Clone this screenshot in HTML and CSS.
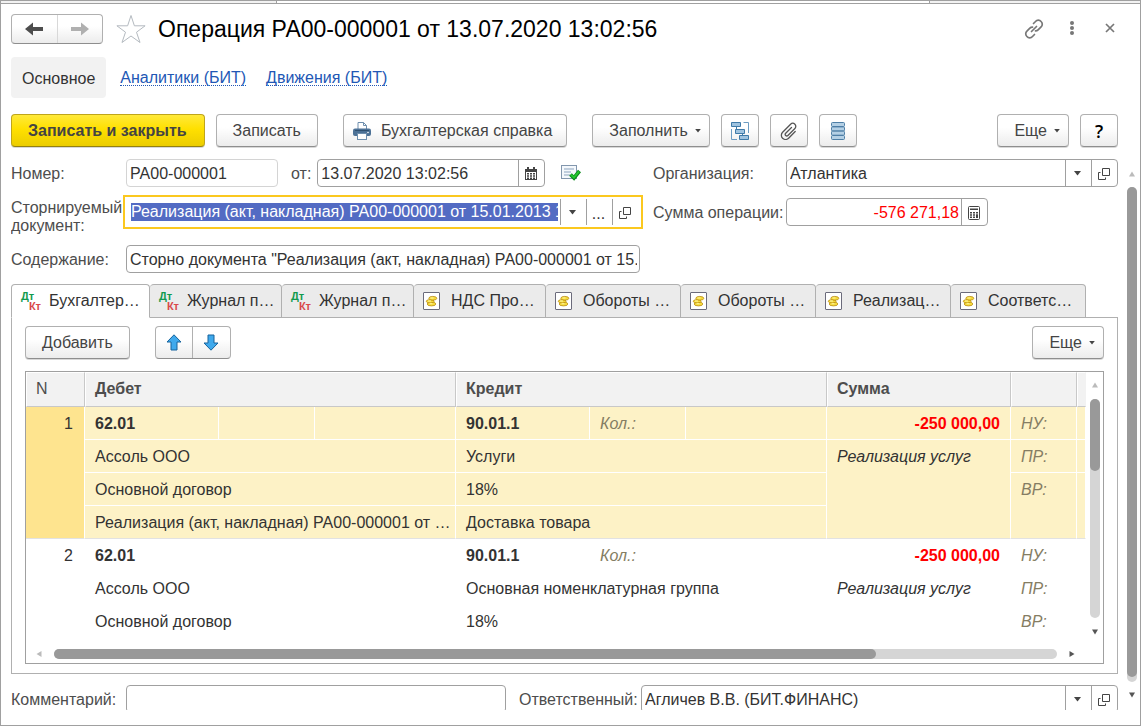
FILE: index.html
```html
<!DOCTYPE html>
<html lang="ru">
<head>
<meta charset="utf-8">
<title>Операция РА00-000001</title>
<link rel="stylesheet" href="styles.css">
</head>
<body>
<svg class="sprite" aria-hidden="true">
  <symbol id="i-open" viewBox="0 0 14 14"><path d="M5.5 1.500h7v7h-7zM3.500 5.500h-2v7h7v-2" fill="none" stroke="#444"/></symbol>
  <symbol id="i-drop" viewBox="0 0 7 5"><path d="M0 0h7L3.500 4.500z" fill="#444"/></symbol>
  <symbol id="i-coin" viewBox="0 0 20 18">
    <rect x=".5" y=".5" width="16" height="17" rx=".5" fill="#fff" stroke="#6b6b7b"/>
    <g fill="#f7dc3c" stroke="#b98a12" stroke-width=".8">
      <ellipse cx="8.500" cy="12" rx="4.300" ry="1.900"/><ellipse cx="7.200" cy="9.300" rx="3.900" ry="1.700"/><ellipse cx="9.800" cy="6.300" rx="4" ry="1.900"/>
    </g>
    <path d="M7.500 6h3M5 9h3M6.500 11.700h3" stroke="#fff6a0" fill="none"/>
  </symbol>
</svg>
<div class="window">
  <div class="strip"><span></span><span></span><span></span></div>

  <header class="titlebar">
    <div class="pair nav-pair">
      <button type="button" aria-label="Назад"><svg width="18" height="14" viewBox="0 0 18 14"><path d="M0 7l8-6.500v4.500h10v4H8v4.500z" fill="#4d4d4d"/></svg></button>
      <button type="button" aria-label="Вперед"><svg width="18" height="14" viewBox="0 0 18 14"><path d="M18 7l-8-6.500v4.500H0v4h10v4.500z" fill="#b0b0b0"/></svg></button>
    </div>
    <button type="button" class="plain star" aria-label="В избранное"><svg width="30" height="30" viewBox="0 0 30 30"><path d="M15 1.500l3.400 10.300h10.700l-8.600 6.400 3.500 10.300-9-6.500-9 6.500 3.500-10.300L.9 11.800h10.700z" fill="#fff" stroke="#b4bac0"/></svg></button>
    <h1>Операция РА00-000001 от 13.07.2020 13:02:56</h1>
    <div class="window-tools">
      <button type="button" class="plain" aria-label="Ссылка"><svg width="20" height="20" viewBox="0 0 20 20" fill="none" stroke="#777" stroke-width="1.700" stroke-linecap="round"><path d="M9.500 4.500l2-2a3.700 3.700 0 0 1 5.600 0a3.700 3.700 0 0 1 0 5.400l-3 3a3.500 3.500 0 0 1-2.600 1M10.500 15.500l-2 2a3.700 3.700 0 0 1-5.600 0a3.700 3.700 0 0 1 0-5.400l3-3a3.500 3.500 0 0 1 2.600-1M7.500 12.500l5-5"/></svg></button>
      <button type="button" class="plain" aria-label="Меню"><svg width="20" height="20" viewBox="0 0 20 20" fill="#777"><circle cx="10" cy="4" r="2"/><circle cx="10" cy="9" r="2"/><circle cx="10" cy="14" r="2"/></svg></button>
      <button type="button" class="plain" aria-label="Закрыть"><svg width="20" height="20" viewBox="0 0 20 20"><path d="M6 5l8 8M14 5l-8 8" stroke="#777" stroke-width="1.700"/></svg></button>
    </div>
  </header>

  <nav class="sections">
    <span class="current">Основное</span>
    <a href="#analytics">Аналитики (БИТ)</a>
    <a href="#moves">Движения (БИТ)</a>
  </nav>

  <div class="commands">
    <button type="button" class="btn primary">Записать и закрыть</button>
    <button type="button" class="btn">Записать</button>
    <button type="button" class="btn apart print"><svg width="18" height="18" viewBox="0 0 18 18"><path d="M5 8V.500h5.500L13.500 3.500V8" fill="#fff" stroke="#6f8fae"/><path d="M10.500.500v3h3" fill="none" stroke="#6f8fae"/><rect y="6.500" width="18" height="7.500" rx="2" fill="#4c7196"/><path d="M2 8.500h14" stroke="#2f5070"/><circle cx="15" cy="10.500" r=".8" fill="#fff"/><rect x="4.500" y="11.500" width="9" height="6" fill="#fff" stroke="#6f8fae"/></svg>Бухгалтерская справка</button>
    <button type="button" class="btn apart menu">Заполнить<svg width="6" height="4"><use href="#i-drop"/></svg></button>
    <button type="button" class="btn square" aria-label="Структура"><svg width="18" height="18" viewBox="0 0 18 18"><path d="M12.500.500h5V11M.500 7v10.500H6" fill="none" stroke="#6d9cc2"/><g fill="#9fc3df" stroke="#3f7aa8"><path d="M.500.500h9v4h-9zM4.500 7.500h9v4h-9zM8.500 13.500h9v4h-9z"/></g><path d="M5.500 5v2.500M11.500 12v1.500" stroke="#3f7aa8"/></svg></button>
    <button type="button" class="btn square" aria-label="Файлы"><svg width="18" height="18" viewBox="0 0 18 18" fill="none" stroke="#555" stroke-width="1.300" stroke-linecap="round"><path d="M11.500 5.500l-5.800 5.800a1.500 1.500 0 0 0 2.200 2.200l7-7a3 3 0 0 0-4.300-4.300l-8 8a4.200 4.200 0 0 0 6 6l6.600-6.700"/></svg></button>
    <button type="button" class="btn square" aria-label="Список"><svg width="14" height="18" viewBox="0 0 14 18"><g fill="#b4d0e5" stroke="#4d7ea6"><rect x=".5" y=".5" width="13" height="4" rx="1"/><rect x=".5" y="4.900" width="13" height="4" rx="1"/><rect x=".5" y="9.200" width="13" height="4" rx="1"/><rect x=".5" y="13.500" width="13" height="4" rx="1"/></g></svg></button>
    <span class="grow"></span>
    <button type="button" class="btn menu">Еще<svg width="6" height="4"><use href="#i-drop"/></svg></button>
    <button type="button" class="btn square help">?</button>
  </div>

  <div class="viewport">
    <main class="form">
      <div class="fields">
        <label for="number">Номер:</label>
        <div class="line">
          <div class="field muted number"><input id="number" value="РА00-000001"></div>
          <label for="date">от:</label>
          <div class="field date"><input id="date" value="13.07.2020 13:02:56"><button type="button" aria-label="Календарь"><svg width="12" height="13" viewBox="0 0 12 13"><path d="M0 2h2V0h2v2h4V0h2v2h2v11H0z" fill="#444"/><path d="M1 5h10v7H1z" fill="#fff"/><path d="M2 6h2v1.500H2zM5 6h2v1.500H5zM8 6h2v1.500H8zM2 8.300h2v1.500H2zM5 8.300h2v1.500H5zM8 8.300h2v1.500H8zM2 10.500h2V12H2zM5 10.500h2V12H5zM8 10.500h2V12H8z" fill="#444"/></svg></button></div>
          <svg class="posted" width="20" height="16" viewBox="0 0 20 16"><rect x=".5" y=".5" width="15" height="13" fill="#f4f8fc" stroke="#8296ad"/><path d="M3 4h10M3 7h7M3 10h6" stroke="#8ba3bd"/><path d="M9.500 9.500l3.500 3.500 5.500-7" fill="none" stroke="#0b8a1b" stroke-width="3.800"/><path d="M10 9.800l3 2.800 5-6.200" fill="none" stroke="#23c52f" stroke-width="2"/></svg>
        </div>
        <label class="second" for="org">Организация:</label>
        <div class="field"><input id="org" value="Атлантика"><button type="button" aria-label="Выбрать"><svg width="7" height="5"><use href="#i-drop"/></svg></button><button type="button" aria-label="Открыть"><svg width="14" height="14"><use href="#i-open"/></svg></button></div>

        <label for="storno">Сторнируемый документ:</label>
        <div class="field active"><input id="storno" value="Реализация (акт, накладная) РА00-000001 от 15.01.2013 12:00:00"><button type="button" aria-label="Выбрать"><svg width="7" height="5"><use href="#i-drop"/></svg></button><button type="button" class="dots">...</button><button type="button" aria-label="Открыть"><svg width="14" height="14"><use href="#i-open"/></svg></button></div>
        <label class="second" for="total">Сумма операции:</label>
        <div class="field total"><input id="total" value="-576 271,18"><button type="button" aria-label="Калькулятор"><svg width="12" height="14" viewBox="0 0 12 14"><rect x=".5" y=".5" width="11" height="13" rx="1" fill="#fff" stroke="#444"/><path d="M2 2.500h8v1.500H2zM2 6h2v1.500H2zM5 6h2v1.500H5zM8 6h2v1.500H8zM2 8.300h2v1.500H2zM5 8.300h2v1.500H5zM2 10.500h2V12H2zM5 10.500h2V12H5zM8 8.300h2V12H8z" fill="#444"/></svg></button></div>

        <label for="content">Содержание:</label>
        <div class="field"><input id="content" value="Сторно документа &quot;Реализация (акт, накладная) РА00-000001 от 15.01.2013&quot;"></div>
      </div>

      <div class="tabs" role="tablist">
        <button type="button" role="tab" class="wide" aria-selected="true"><span class="dtkt"><span>Дт</span><span>Кт</span></span>Бухгалтер…</button>
        <button type="button" role="tab" class="narrow"><span class="dtkt"><span>Дт</span><span>Кт</span></span>Журнал п…</button>
        <button type="button" role="tab" class="narrow"><span class="dtkt"><span>Дт</span><span>Кт</span></span>Журнал п…</button>
        <button type="button" role="tab" class="narrow"><svg width="20" height="18"><use href="#i-coin"/></svg>НДС Про…</button>
        <button type="button" role="tab"><svg width="20" height="18"><use href="#i-coin"/></svg>Обороты …</button>
        <button type="button" role="tab"><svg width="20" height="18"><use href="#i-coin"/></svg>Обороты …</button>
        <button type="button" role="tab"><svg width="20" height="18"><use href="#i-coin"/></svg>Реализац…</button>
        <button type="button" role="tab"><svg width="20" height="18"><use href="#i-coin"/></svg>Соответс…</button>
      </div>

      <section class="panel">
        <div class="commands inner">
          <button type="button" class="btn">Добавить</button>
          <div class="pair move-pair">
            <button type="button" aria-label="Вверх"><svg width="16" height="17" viewBox="0 0 16 17"><path d="M8 .800l7 7.200h-4v8H5V8H1z" fill="#3fa9ec" stroke="#16639c"/></svg></button>
            <button type="button" aria-label="Вниз"><svg width="16" height="17" viewBox="0 0 16 17"><path d="M8 16.200l7-7.200h-4V1H5v8H1z" fill="#3fa9ec" stroke="#16639c"/></svg></button>
          </div>
          <span class="grow"></span>
          <button type="button" class="btn menu">Еще<svg width="6" height="4"><use href="#i-drop"/></svg></button>
        </div>

        <div class="grid">
          <div class="grid-body">
            <table>
              <colgroup><col class="c-n"><col class="c-acc"><col class="c-qty"><col><col class="c-acc"><col class="c-qty"><col><col class="c-sum"><col class="c-tax"><col class="c-rest"></colgroup>
              <thead><tr><th class="light">N</th><th colspan="3">Дебет</th><th colspan="3">Кредит</th><th>Сумма</th><th></th><th></th></tr></thead>
              <tbody class="selected">
                <tr><td class="n" rowspan="4">1</td><td class="b">62.01</td><td></td><td></td><td class="b">90.01.1</td><td class="hint">Кол.:</td><td></td><td class="sum">-250 000,00</td><td class="hint">НУ:</td><td></td></tr>
                <tr><td colspan="3">Ассоль ООО</td><td colspan="3">Услуги</td><td class="i" rowspan="3">Реализация услуг</td><td class="hint">ПР:</td><td></td></tr>
                <tr><td colspan="3">Основной договор</td><td colspan="3">18%</td><td class="hint" rowspan="2">ВР:</td><td rowspan="2"></td></tr>
                <tr><td colspan="3">Реализация (акт, накладная) РА00-000001 от …</td><td colspan="3">Доставка товара</td></tr>
              </tbody>
              <tbody>
                <tr><td class="n" rowspan="3">2</td><td class="b">62.01</td><td></td><td></td><td class="b">90.01.1</td><td class="hint">Кол.:</td><td></td><td class="sum">-250 000,00</td><td class="hint">НУ:</td><td></td></tr>
                <tr><td colspan="3">Ассоль ООО</td><td colspan="3">Основная номенклатурная группа</td><td class="i" rowspan="2">Реализация услуг</td><td class="hint">ПР:</td><td></td></tr>
                <tr><td colspan="3">Основной договор</td><td colspan="3">18%</td><td class="hint">ВР:</td><td></td></tr>
              </tbody>
            </table>
            <div class="scroll vertical">
              <svg width="6" height="6"><path d="M0 5.500h6L3 .5z" fill="#bbb"/></svg>
              <div class="track"><div class="thumb"></div></div>
              <svg width="6" height="6"><path d="M0 .5h6L3 5.500z" fill="#555"/></svg>
            </div>
          </div>
          <div class="scroll horizontal">
            <svg width="6" height="6"><path d="M5.500 0v6L.5 3z" fill="#bbb"/></svg>
            <div class="track"><div class="thumb"></div></div>
            <svg width="6" height="6"><path d="M.5 0v6L5.500 3z" fill="#555"/></svg>
          </div>
        </div>
      </section>

      <div class="footer-fields">
        <label for="comment">Комментарий:</label>
        <div class="field"><input id="comment"></div>
        <label class="second" for="owner">Ответственный:</label>
        <div class="field"><input id="owner" value="Агличев В.В. (БИТ.ФИНАНС)"><button type="button" aria-label="Выбрать"><svg width="7" height="5"><use href="#i-drop"/></svg></button><button type="button" aria-label="Открыть"><svg width="14" height="14"><use href="#i-open"/></svg></button></div>
      </div>
    </main>
    <div class="scroll vertical page">
      <svg width="6" height="6"><path d="M0 5.500h6L3 .5z" fill="#bbb"/></svg>
      <div class="track"><div class="thumb"></div></div>
      <svg width="6" height="6"><path d="M0 .5h6L3 5.500z" fill="#555"/></svg>
    </div>
  </div>
</div>
</body>
</html>
```
FILE: styles.css
```css
* { box-sizing: border-box; }

body {
  margin: 0;
  background: #fff;
  color: #333;
  font: 16px/18px "Liberation Sans", Arial, sans-serif;
}

button, input { font: inherit; color: inherit; margin: 0; }
button { padding: 0; border: 0; background: none; white-space: nowrap; }
svg { display: block; flex: none; }
.sprite { position: absolute; width: 0; height: 0; }
.grow { flex: 1; }

.window {
  display: flex;
  flex-direction: column;
  height: 100vh;
  border: 1px solid #a0a0a0;
}

.strip {
  display: grid;
  grid-template-columns: 275fr 653fr 211fr;
  flex: none;
  height: 3px;
  border-bottom: 1px solid #a0a0a0;
  background: #f2f2f2;
}
.strip span + span { border-left: 1px solid #a0a0a0; }
.strip span:nth-child(2) { background: #fff; }

/* Title */
.titlebar {
  display: flex;
  align-items: center;
  flex: none;
  padding: 10px 22px 0 10px;
}
.pair {
  display: flex;
  border: 1px solid #b0b0b0;
  border-bottom-color: #8e8e8e;
  border-radius: 4px;
  background: linear-gradient(#fff 40%, #ececec);
}
.pair button { display: flex; align-items: center; justify-content: center; flex: 1; }
.pair button + button { border-left: 1px solid #b0b0b0; }
.nav-pair { width: 92px; height: 30px; }
.nav-pair button + button { border-color: #d8d8d8; }
.star { margin: 0 12px 0 13px; }
h1 { flex: 1; margin: 0; color: #000; font-size: 23px; line-height: 30px; font-weight: 400; }
.window-tools { display: flex; gap: 18px; margin-right: -2px; }

/* Section links */
.sections { display: flex; align-items: center; flex: none; gap: 20px; margin: 13px 22px 0 10px; }
.current { margin-right: -6px; padding: 13px 11px 10px; border-radius: 4px; background: #f2f2f2; }
.sections a { padding-top: 1px; color: #2257b5; line-height: 15px; text-decoration: none; border-bottom: 1px dotted #2257b5; }

/* Commands */
.commands { display: flex; flex: none; gap: 11px; margin: 16px 22px 0 10px; }
.commands.inner { margin: 0; }
.btn {
  display: flex;
  align-items: center;
  justify-content: center;
  height: 33px;
  padding: 0 16px;
  border: 1px solid #b0b0b0;
  border-bottom-color: #8e8e8e;
  border-radius: 4px;
  background: linear-gradient(#fff 40%, #ececec);
  box-shadow: 0 1px 0 #d8d8d8;
  color: #444;
}
.primary {
  padding: 0 17px 0 16px;
  border-color: #bfa51a;
  border-bottom-color: #94810f;
  background: linear-gradient(#ffe93a, #ffe000 45%, #eccd00);
  font-weight: 700;
}
.apart { margin-left: 14px; }
.print { gap: 10px; padding: 0 14px 0 9px; }
.menu { gap: 7px; padding: 0 8px 0 16px; }
.square { width: 38px; padding: 0; }
.help { color: #000; font: 600 18px/18px "Open Sans", sans-serif; }

/* Scrolled form */
.viewport {
  display: flex;
  flex: 1;
  gap: 9px;
  min-height: 0;
  margin: 12px 3px 15px 10px;
  overflow: hidden;
}
.form { flex: 1; min-width: 0; }
label { color: #4d4d4d; }

.fields, .footer-fields { display: grid; align-items: start; row-gap: 11px; }
.fields { grid-template-columns: 115px minmax(0, 514fr) 146px minmax(0, 332fr); }
.footer-fields { grid-template-columns: 115px minmax(0, 380fr) 135px minmax(0, 477fr); margin-top: 11px; }
.fields > label, .footer-fields > label { padding-top: 6px; }
.fields > label[for="storno"] { padding-top: 1px; margin-bottom: -1px; }
.second { padding-left: 13px; }
.line { display: flex; align-items: center; }
.line label { margin: 0 6px 0 13px; padding-top: 2px; }
.number { flex: 0 1 152px; }
.date { flex: 0 1 228px; }
.posted { margin-left: 16px; }

.field {
  display: flex;
  align-items: center;
  min-width: 0;
  height: 28px;
  border: 1px solid #a0a0a0;
  border-radius: 4px;
  background: #fff;
}
.field input {
  flex: 1;
  min-width: 0;
  height: 26px;
  padding: 2px 2px 0 3px;
  border: 0;
  outline: 0;
  background: none;
}
.field button {
  display: flex;
  align-items: center;
  justify-content: center;
  flex: none;
  width: 26px;
  height: 26px;
  padding: 1px 2px 0 0;
  border-left: 1px solid #a0a0a0;
}
.muted { border-color: #d4d4d4; }
.active { border-color: transparent; border-radius: 0; outline: 2px solid #fbc81f; outline-offset: 1px; }
.active input { height: 18px; margin: 0 2px 0 4px; padding: 0; background: #536bc3; color: #fff; }
.active button:last-child { width: 27px; padding-right: 3px; }
.active .dots { padding-top: 3px; }
.total { width: 202px; }
.total input { color: #f00; text-align: right; }

/* Tabs */
.tabs { display: flex; margin-top: 11px; }
.tabs button {
  display: flex;
  align-items: center;
  gap: 8px;
  flex: 0 1 135px;
  min-width: 0;
  height: 34px;
  padding: 0 0 0 9px;
  border: 1px solid #b0b0b0;
  border-left-width: 0;
  border-radius: 4px 4px 0 0;
  background: #ebebeb;
}
.tabs .wide { flex-basis: 139px; }
.tabs .narrow { flex-basis: 132px; }
.tabs button:first-child { border-left-width: 1px; border-bottom-color: #fff; background: #fff; }
.dtkt { display: flex; flex-direction: column; flex: none; width: 20px; color: #129a4e; font-size: 11px; line-height: 10px; font-weight: 700; text-align: left; }
.dtkt span + span { color: #d9494a; text-align: right; }
.panel {
  margin-top: -1px;
  padding: 9px 13px 9px;
  border: 1px solid #b0b0b0;
  border-top: 0;
  background: linear-gradient(#b0b0b0, #b0b0b0) 138px 0 / 100% 1px no-repeat;
}
.move-pair { width: 76px; margin-left: 14px; }

/* Entries */
.grid { margin-top: 12px; border: 1px solid #a0a0a0; }
.grid-body { display: flex; }
table { flex: 1; width: 0; border-collapse: separate; border-spacing: 0; table-layout: fixed; }
.c-n { width: 59px; }
.c-acc { width: 134px; }
.c-qty { width: 96px; }
.c-sum { width: 184px; }
.c-tax { width: 66px; }
.c-rest { width: 9px; }
th {
  height: 35px;
  padding: 0 9px 2px;
  border: 1px solid #fff;
  border-right-color: #c8c8c8;
  border-bottom-color: #c8c8c8;
  background: #f2f2f2;
  color: #4d4d4d;
  text-align: left;
}
th:last-child { border-right-color: #f2f2f2; padding: 0; }
.light { font-weight: 400; }
td {
  height: 33px;
  padding: 8px 0 6px 10px;
  border: 0 solid #fff;
  border-width: 0 1px 1px 0;
  vertical-align: top;
  white-space: nowrap;
}
.hint + td:last-child { padding-left: 0; }
.selected td { background: #fdf2c6; }
.selected .n { background: #fee48f; }
.selected .n, .selected tr:last-child td, .selected td[rowspan] { border-bottom-color: #e2e2e2; }
.n { padding-right: 11px; text-align: right; }
.b { font-weight: 700; }
.i { font-style: italic; }
.hint { color: #857d63; font-style: italic; }
.sum { padding-right: 10px; color: #f00; font-weight: 700; text-align: right; }

/* Scroll bars */
.scroll { display: flex; align-items: center; flex: none; }
.track { flex: 1; border-radius: 5px; background: #d5d5d5; }
.thumb { border-radius: 5px; background: #999; }
.vertical { flex-direction: column; }
.vertical .track { width: 10px; }
.grid .vertical { width: 17px; gap: 11px; padding: 10px 0 3px; }
.grid .vertical .thumb { height: 33%; }
.horizontal { gap: 12px; height: 19px; margin-top: 6px; padding: 0 28px 0 10px; }
.horizontal .track { height: 10px; }
.horizontal .thumb { width: 82%; height: 10px; }
.page { gap: 10px; padding: 12px 0; }
.page .thumb { height: 99%; }
```
